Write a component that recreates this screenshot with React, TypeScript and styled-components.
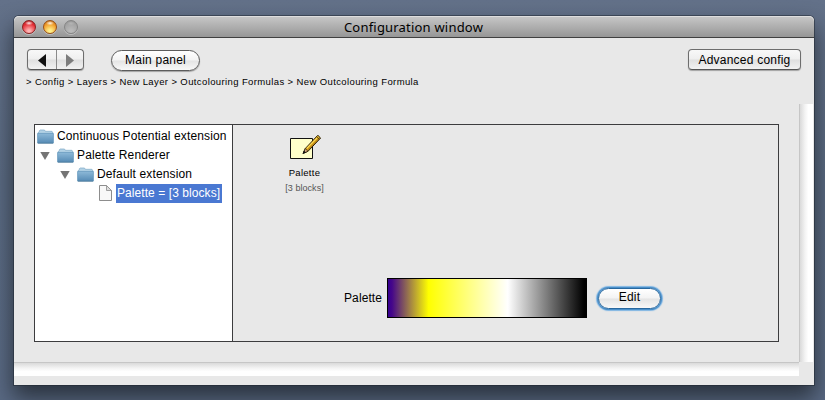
import React from "react";
import styled, { createGlobalStyle, css } from "styled-components";

const GlobalStyle = createGlobalStyle`
  * { box-sizing: border-box; }
  html, body { margin: 0; padding: 0; }
  body {
    width: 825px;
    height: 400px;
    overflow: hidden;
    font-family: "Liberation Sans", Arial, sans-serif;
    font-size: 12px;
    color: #000;
  }
`;

const Desktop = styled.div`
  width: 825px;
  height: 400px;
  padding: 16px 11px 15px 14px;
  overflow: hidden;
  background: linear-gradient(#637189, #5a6a82 45%, #596983);
`;

const Window = styled.section`
  width: 800px;
  height: 369px;
  border-radius: 5px 5px 0 0;
  background: #e8e8e8;
  box-shadow: 0 0 0 1px rgba(30, 38, 48, 0.5), 0 12px 22px 1px rgba(20, 25, 30, 0.68);
`;

const TitleBar = styled.header`
  display: grid;
  grid-template-columns: 80px 1fr 81px;
  align-items: center;
  height: 22px;
  border-bottom: 1px solid #404040;
  border-radius: 5px 5px 0 0;
  background: linear-gradient(#c8c8c8, #969696);
  box-shadow: inset 0 1px #dedede;
`;

const Lights = styled.div`
  display: flex;
  gap: 7px;
  padding-left: 8px;
`;

const Light = styled.span<{ $rim: string; $mid: string; $glow: string; $off?: boolean }>`
  width: 14px;
  height: 14px;
  border: 1px solid ${(p) => p.$rim};
  border-radius: 50%;
  background:
    radial-gradient(ellipse 4px 2.2px at 50% 18%, rgba(255, 255, 255, ${(p) => (p.$off ? 0.2 : 0.9)}), transparent),
    radial-gradient(circle at 50% 85%, ${(p) => p.$glow} 10%, ${(p) => p.$mid} 65%, ${(p) => p.$rim} 110%);
  box-shadow: 0 1px rgba(255, 255, 255, 0.35);
`;

const Title = styled.h1`
  margin: 0;
  padding-top: 1px;
  font: 400 13px/21px "Noto Sans", "Open Sans", sans-serif;
  letter-spacing: 0.2px;
  text-align: center;
  white-space: nowrap;
`;

const Body = styled.div`
  display: grid;
  grid-template-columns: 785px 14px;
  grid-template-rows: 66px 258px 14px;
`;

const Header = styled.div`
  grid-column: 1 / 3;
  padding: 11px 0 0 12px;
`;

const Toolbar = styled.div`
  display: flex;
  align-items: flex-start;
  height: 24px;
  padding-left: 1px;
`;

const glossy = css`
  border: 1px solid #6d6d6d;
  background: linear-gradient(#fff, #f3f3f3 48%, #e4e4e4 52%, #f8f8f8);
  box-shadow: 0 1px 1px rgba(0, 0, 0, 0.3);
`;

const HistoryControl = styled.div`
  ${glossy}
  display: flex;
  width: 57px;
  height: 21px;
  margin-right: 27px;
  border-radius: 4px;
  background: linear-gradient(#f8f8f8, #efefef 48%, #dfdfdf 52%, #f2f2f2);
  border-bottom-color: #555;
`;

const HistoryButton = styled.button<{ $disabled?: boolean }>`
  display: flex;
  flex: 1;
  align-items: center;
  justify-content: center;
  padding: 1px 0 0 ${(p) => (p.$disabled ? 0 : 1)}px;
  border: 0;
  border-left: ${(p) => (p.$disabled ? "1px solid #8b8b8b" : "0")};
  background: none;
  color: ${(p) => (p.$disabled ? "#7d7d7d" : "#111")};
`;

const Button = styled.button<{ $width: number; $kind: "pill" | "square" | "focus" }>`
  ${glossy}
  width: ${(p) => p.$width}px;
  height: 21px;
  padding: 0;
  border-radius: ${(p) => (p.$kind === "square" ? 4 : 11)}px;
  font: 12px/18px "Liberation Sans", Arial, sans-serif;
  letter-spacing: 0.22px;
  text-align: center;
  color: #000;
  ${(p) =>
    p.$kind === "pill" &&
    css`
      margin-top: 1px;
      padding-bottom: 2px;
      border-color: #5c5c5c;
    `}
  ${(p) =>
    p.$kind === "square" &&
    css`
      margin-left: auto;
      margin-right: 12px;
      border-bottom-color: #555;
      background: linear-gradient(#f8f8f8, #efefef 48%, #dfdfdf 52%, #f2f2f2);
    `}
  ${(p) =>
    p.$kind === "focus" &&
    css`
      border: 1px solid #28689f;
      box-shadow: 0 0 0 1px #4a8fc9, 0 0 1px 2px #7fb5e3;
      padding-bottom: 3px;
      line-height: 17px;
    `}
`;

const Breadcrumb = styled.nav`
  height: 14px;
  padding-top: 3px;
  font-size: 9.5px;
  line-height: 12px;
  letter-spacing: 0.385px;
  white-space: nowrap;
`;

const Content = styled.main`
  padding: 20px;
`;

const SplitPane = styled.div`
  display: grid;
  grid-template-columns: 198px 1fr;
  width: 745px;
  height: 218px;
  border: 1px solid #3c3c3e;
`;

const Tree = styled.ul`
  margin: 0;
  padding: 2px 0 0;
  border-right: 1px solid #3c3c3e;
  background: #fff;
  list-style: none;
`;

const TreeRow = styled.li<{ $indent: number }>`
  display: flex;
  align-items: center;
  height: 19px;
  padding-left: ${(p) => p.$indent}px;
  white-space: nowrap;
`;

const TreeLabel = styled.span<{ $selected?: boolean }>`
  height: 19px;
  margin-left: 2px;
  padding: 0 1px;
  line-height: 18px;
  letter-spacing: 0.14px;
  ${(p) =>
    p.$selected &&
    css`
      width: 106px;
      margin-left: 4px;
      letter-spacing: 0.07px;
      background: #4a78d2;
      color: #fff;
    `}
`;

const Disclosure = styled.svg`
  width: 10px;
  height: 9px;
  margin-right: 7px;
`;

const Detail = styled.div`
  padding: 10px 0 0 50px;
`;

const BlockItem = styled.figure`
  display: flex;
  flex-direction: column;
  align-items: center;
  width: 43px;
  height: 143px;
  margin: 0;
`;

const BlockName = styled.span<{ $muted?: boolean }>`
  margin-top: ${(p) => (p.$muted ? 3 : 7)}px;
  font-size: ${(p) => (p.$muted ? 9 : 9.5)}px;
  line-height: 12px;
  letter-spacing: ${(p) => (p.$muted ? 0.05 : 0.3)}px;
  white-space: nowrap;
  color: ${(p) => (p.$muted ? "#555" : "#000")};
`;

const PaletteRow = styled.div`
  display: flex;
  align-items: center;
  padding-left: 61px;
`;

const PaletteLabel = styled.span`
  width: 43px;
  letter-spacing: 0.1px;
`;

const Swatch = styled.div`
  width: 200px;
  height: 40px;
  margin-right: 11px;
  border: 1px solid #000;
  background: linear-gradient(90deg, #35008f 0, #45068a 2%, #ff0 20.5%, #fff 60.5%, #000 99%);
`;

const VerticalTrack = styled.div`
  border-left: 1px solid #c6c6c6;
  background: linear-gradient(90deg, #dadada, #f4f4f4 40%, #fff 65%);
`;

const HorizontalTrack = styled.div`
  border-top: 1px solid #c6c6c6;
  background: linear-gradient(#dadada, #f4f4f4 40%, #fff 65%);
`;

const Arrow = ({ flip }: { flip?: boolean }) => (
  <svg width="8" height="13" viewBox="0 0 8 13">
    <path d={flip ? "M0 0v13L8 6.5z" : "M8 0v13L0 6.5z"} fill="currentColor" />
  </svg>
);

const Folder = () => (
  <svg width="17" height="15" viewBox="0 0 17 15">
    <defs>
      <linearGradient id="folderFront" x1="0" y1="0" x2="0" y2="1">
        <stop offset="0" stopColor="#8db9d8" />
        <stop offset="1" stopColor="#568bb5" />
      </linearGradient>
    </defs>
    <path d="M1.4 13V3.2L2.4 2.6V1.6L3.2 1h4.3l.8 1.3h6.6l.7.8V13z" fill="#b3d2e5" stroke="#80aac7" strokeWidth="0.7" />
    <path d="M.6 4.4h15.8V14H.6z" fill="url(#folderFront)" stroke="#5f93ba" strokeWidth="0.7" />
    <path d="M.8 14.2h15.4" stroke="#477597" strokeWidth="0.8" />
  </svg>
);

const PageIcon = styled.svg`
  width: 13px;
  height: 16px;
  margin-bottom: 1px;
`;

const Page = () => (
  <PageIcon viewBox="0 0 13 16">
    <path d="M.5.5h7l5 5v10H.5z" fill="#f8f8f8" stroke="#8d8d8d" />
    <path d="M7.5.5v5h5z" fill="#ddd" stroke="#8d8d8d" strokeWidth="0.8" />
  </PageIcon>
);

const Triangle = () => (
  <Disclosure viewBox="0 0 10 9">
    <path d="M0.3 1h9.4L5 9z" fill="#747474" />
  </Disclosure>
);

const NoteAndPencil = () => (
  <svg width="32" height="25" viewBox="-1 1 32 25">
    <path d="M.5 4.5h22v20H.5z" fill="#ffffca" stroke="#111" />
    <path d="M13.3 19.3l2-4.8L27.8 1.3 30.6 4 18 17.3z" fill="#d9a21b" stroke="#251b08" strokeWidth="1" />
    <path d="M16.8 14.4L28.3 2.6" stroke="#ffdc55" strokeWidth="1.2" />
    <path d="M17.9 15.8L29.5 4" stroke="#9b6813" strokeWidth="0.8" />
    <path d="M15.3 14.5l2.7 2.8-4.8 2z" fill="#d7a77f" stroke="#251b08" strokeWidth="0.7" />
    <path d="M12.5 20l1.4-3.4 2 1.8z" fill="#111" />
    <path d="M26.5 2.7l2.7 2.6" stroke="#55420c" />
  </svg>
);

export default function App() {
  return (
    <>
      <GlobalStyle />
      <Desktop>
        <Window>
          <TitleBar>
            <Lights>
              <Light $rim="#8b2020" $mid="#e32b32" $glow="#ffb3b3" />
              <Light $rim="#985016" $mid="#f09a28" $glow="#fff08a" />
              <Light $rim="#858585" $mid="#a4a4a4" $glow="#b9b9b9" $off />
            </Lights>
            <Title>Configuration window</Title>
          </TitleBar>
          <Body>
            <Header>
              <Toolbar>
                <HistoryControl>
                  <HistoryButton aria-label="Back"><Arrow /></HistoryButton>
                  <HistoryButton aria-label="Forward" $disabled><Arrow flip /></HistoryButton>
                </HistoryControl>
                <Button $width={89} $kind="pill">Main panel</Button>
                <Button $width={113} $kind="square">Advanced config</Button>
              </Toolbar>
              <Breadcrumb>
                &gt; Config &gt; Layers &gt; New Layer &gt; Outcolouring Formulas &gt; New Outcolouring Formula
              </Breadcrumb>
            </Header>
            <Content>
              <SplitPane>
                <Tree>
                  <TreeRow $indent={2}><Folder /><TreeLabel>Continuous Potential extension</TreeLabel></TreeRow>
                  <TreeRow $indent={5}><Triangle /><Folder /><TreeLabel>Palette Renderer</TreeLabel></TreeRow>
                  <TreeRow $indent={25}><Triangle /><Folder /><TreeLabel>Default extension</TreeLabel></TreeRow>
                  <TreeRow $indent={64}><Page /><TreeLabel $selected>Palette = [3 blocks]</TreeLabel></TreeRow>
                </Tree>
                <Detail>
                  <BlockItem>
                    <NoteAndPencil />
                    <BlockName>Palette</BlockName>
                    <BlockName $muted>[3 blocks]</BlockName>
                  </BlockItem>
                  <PaletteRow>
                    <PaletteLabel>Palette</PaletteLabel>
                    <Swatch />
                    <Button $width={63} $kind="focus">Edit</Button>
                  </PaletteRow>
                </Detail>
              </SplitPane>
            </Content>
            <VerticalTrack />
            <HorizontalTrack />
          </Body>
        </Window>
      </Desktop>
    </>
  );
}
